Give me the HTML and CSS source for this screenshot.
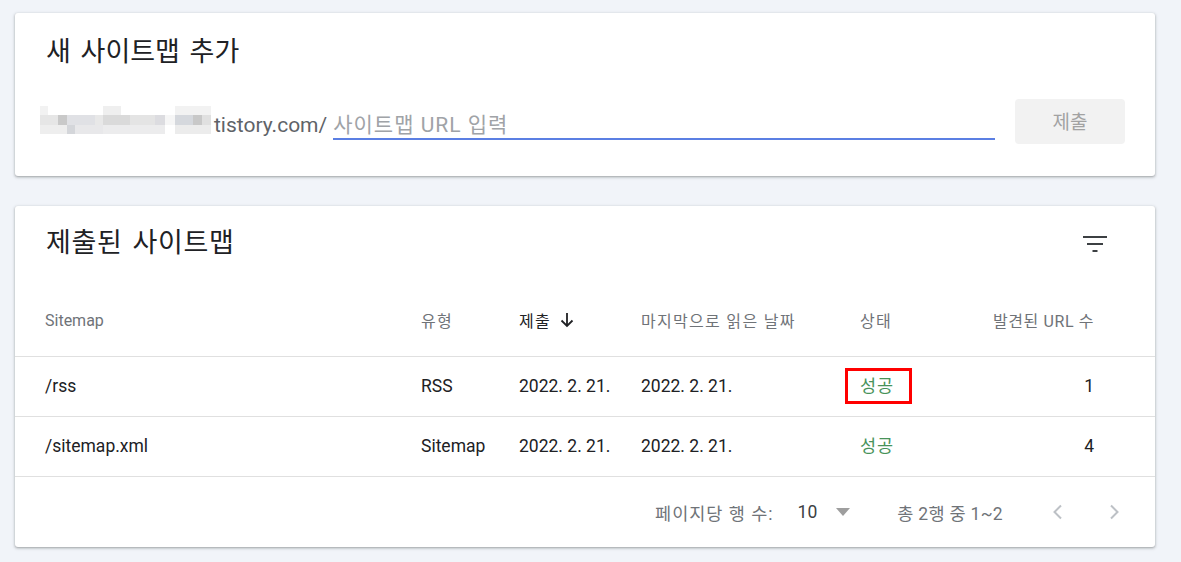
FILE: index.html
```html
<!DOCTYPE html>
<html lang="ko">
<head>
<meta charset="utf-8">
<title>Sitemaps</title>
<link rel="stylesheet" href="styles.css">
</head>
<body>
<main class="page">
  <section class="card add-card">
    <h2 class="card-title">새 사이트맵 추가</h2>
    <div class="input-row">
      <div class="field">
        <div class="blur" aria-hidden="true"></div>
        <span class="domain">tistory.com/</span>
        <input class="url-input" type="text" placeholder="사이트맵 URL 입력">
      </div>
      <button class="submit-btn" type="button">제출</button>
    </div>
  </section>

  <section class="card list-card">
    <div class="list-head">
      <h2 class="card-title wide">제출된 사이트맵</h2>
      <svg class="filter-icon" width="24" height="16" viewBox="0 0 24 16" aria-hidden="true">
        <rect x="0" y="0" width="24" height="2" fill="#3c4043"/>
        <rect x="4" y="7" width="16" height="2" fill="#3c4043"/>
        <rect x="9.5" y="14" width="5" height="2" fill="#3c4043"/>
      </svg>
    </div>

    <div class="table">
      <div class="row thead">
        <div class="cell">Sitemap</div>
        <div class="cell ko">유형</div>
        <div class="cell ko sorted">제출
          <svg class="sort-arrow" width="14" height="16" viewBox="0 0 14 16" aria-hidden="true">
            <path d="M7 1v13M1.5 8.5L7 14l5.5-5.5" fill="none" stroke="#202124" stroke-width="1.8"/>
          </svg>
        </div>
        <div class="cell ko">마지막으로 읽은 날짜</div>
        <div class="cell ko">상태</div>
        <div class="cell ko-mix num">발견된 URL 수</div>
      </div>
      <div class="row tbody">
        <div class="cell">/rss</div>
        <div class="cell">RSS</div>
        <div class="cell">2022. 2. 21.</div>
        <div class="cell">2022. 2. 21.</div>
        <div class="cell ok"><span class="hl">성공</span></div>
        <div class="cell num">1</div>
      </div>
      <div class="row tbody">
        <div class="cell">/sitemap.xml</div>
        <div class="cell">Sitemap</div>
        <div class="cell">2022. 2. 21.</div>
        <div class="cell">2022. 2. 21.</div>
        <div class="cell ok">성공</div>
        <div class="cell num">4</div>
      </div>
    </div>

    <div class="pager">
      <span class="pager-label">페이지당 행 수:</span>
      <span class="pager-size">10</span>
      <span class="caret" aria-hidden="true"></span>
      <span class="pager-range">총 2행 중 1~2</span>
      <svg class="chev chev-left" width="12" height="16" viewBox="0 0 12 16" aria-hidden="true">
        <path d="M9 1.5L2.5 8 9 14.5" fill="none" stroke="#bdc1c6" stroke-width="2"/>
      </svg>
      <svg class="chev chev-right" width="12" height="16" viewBox="0 0 12 16" aria-hidden="true">
        <path d="M3 1.5L9.5 8 3 14.5" fill="none" stroke="#bdc1c6" stroke-width="2"/>
      </svg>
    </div>
  </section>
</main>
</body>
</html>
```

FILE: styles.css
```css
* { box-sizing: border-box; }

html, body {
  margin: 0;
  padding: 0;
  background: #f1f4f9;
  font-family: Roboto, "Noto Sans CJK KR", sans-serif;
  color: #202124;
}

.page {
  padding: 13px 26px 15px 15px;
  display: flex;
  flex-direction: column;
  gap: 30px;
}

.card {
  background: #fff;
  border-radius: 3px;
  box-shadow: 0 1px 2px rgba(60, 64, 67, 0.3), 0 1px 3px 1px rgba(60, 64, 67, 0.15);
}

.card-title {
  margin: 0;
  font-size: 27px;
  line-height: 30px;
  font-weight: 400;
  color: #202124;
  word-spacing: 3px;
}

.card-title.wide {
  letter-spacing: 0.6px;
}

/* ---- add card ---- */
.add-card {
  height: 163px;
  padding: 24px 30px 32px 31px;
}

.input-row {
  margin-top: 32px;
  display: flex;
  align-items: flex-end;
  gap: 20px;
}

.field {
  flex: 1;
  display: flex;
  align-items: flex-end;
  margin-bottom: 4px;
}

.blur {
  width: 171px;
  height: 28px;
  margin-left: -6px;
  margin-bottom: 6px;
  background:
    linear-gradient(to right,
      #f2f2f2 0 8px, #fff 8px 63px, #efefef 63px 81px, #fff 81px 135px, #f2f2f2 135px 171px)
      0 0 / 171px 9px no-repeat,
    linear-gradient(to right,
      #e6e6e6 0 18px, #c9c9c9 18px 27px, #e0e1e5 27px 55px, #e8e8e8 55px 63px,
      #dadada 63px 90px, #e4e4e4 90px 115px, #dcdce0 115px 125px, #f6f6f6 125px 135px,
      #d5d8dd 135px 153px, #c8c8c8 153px 162px, #e0e0e0 162px 171px)
      0 9px / 171px 10px no-repeat,
    linear-gradient(to right,
      #eeeeee 0 27px, #d4d6da 27px 35px, #e8e8ea 35px 63px, #ececed 63px 125px,
      #fff 125px 135px, #ececec 135px 171px)
      0 19px / 171px 9px no-repeat;
}

.domain {
  margin-left: 3px;
  font-size: 21px;
  line-height: 26px;
  margin-bottom: 2px;
  color: #5f6368;
}

.url-input {
  flex: 1;
  margin-left: 6px;
  height: 28px;
  padding: 0;
  border: 0;
  border-bottom: 2px solid #5b7fe3;
  outline: none;
  font-family: Roboto, "Noto Sans CJK KR", sans-serif;
  font-size: 21px;
  line-height: 26px;
  color: #202124;
  background: transparent;
}

.url-input::placeholder {
  color: #a0a3a7;
  letter-spacing: 1px;
}

.submit-btn {
  width: 110px;
  height: 45px;
  border: 0;
  border-radius: 4px;
  background: #f2f2f2;
  color: #a2a2a2;
  font-family: Roboto, "Noto Sans CJK KR", sans-serif;
  font-size: 19px;
  padding: 0 0 3px;
}

/* ---- list card ---- */
.list-card {
  height: 341px;
  padding-top: 22px;
}

.list-head {
  display: flex;
  justify-content: space-between;
  align-items: center;
  padding: 0 48px 0 31px;
}

.filter-icon {
  display: block;
  margin-top: 1px;
}

.table {
  margin-top: 34px;
}

.row {
  display: grid;
  grid-template-columns: 376px 98px 122px 219px 100px 1fr;
  align-items: center;
  padding: 0 61px 0 30px;
  border-bottom: 1px solid #e0e0e0;
}

.row .num { text-align: right; }

.thead {
  height: 65px;
  padding-bottom: 8px;
  font-size: 16px;
  color: #6f7378;
}

.thead .ko { letter-spacing: 1.3px; }
.thead .ko-mix { letter-spacing: 0.6px; }

.thead .sorted {
  color: #202124;
  display: flex;
  align-items: center;
  gap: 9px;
}

.sort-arrow { display: block; }

.tbody {
  height: 60px;
  padding-bottom: 2px;
  font-size: 17.5px;
  line-height: 24px;
  color: #202124;
}

.ok {
  color: #48935a;
  letter-spacing: 1px;
}

.hl {
  position: relative;
}

.hl::after {
  content: "";
  position: absolute;
  left: -15px;
  right: -18px;
  top: -8px;
  bottom: -8px;
  border: 3px solid #ff0000;
}

.pager {
  height: 70px;
  display: flex;
  align-items: center;
  justify-content: flex-end;
  padding-right: 35px;
  font-size: 17.5px;
  color: #6f7378;
}

.pager-label { letter-spacing: 1px; }

.pager-size {
  margin-left: 24px;
  color: #3c4043;
}

.caret {
  margin-left: 19px;
  width: 0;
  height: 0;
  border-left: 7px solid transparent;
  border-right: 7px solid transparent;
  border-top: 8px solid #9e9e9e;
}

.pager-range {
  margin-left: 47px;
  letter-spacing: 0.3px;
}

.chev { display: block; }
.chev-left { margin-left: 49px; }
.chev-right { margin-left: 44px; }
```
